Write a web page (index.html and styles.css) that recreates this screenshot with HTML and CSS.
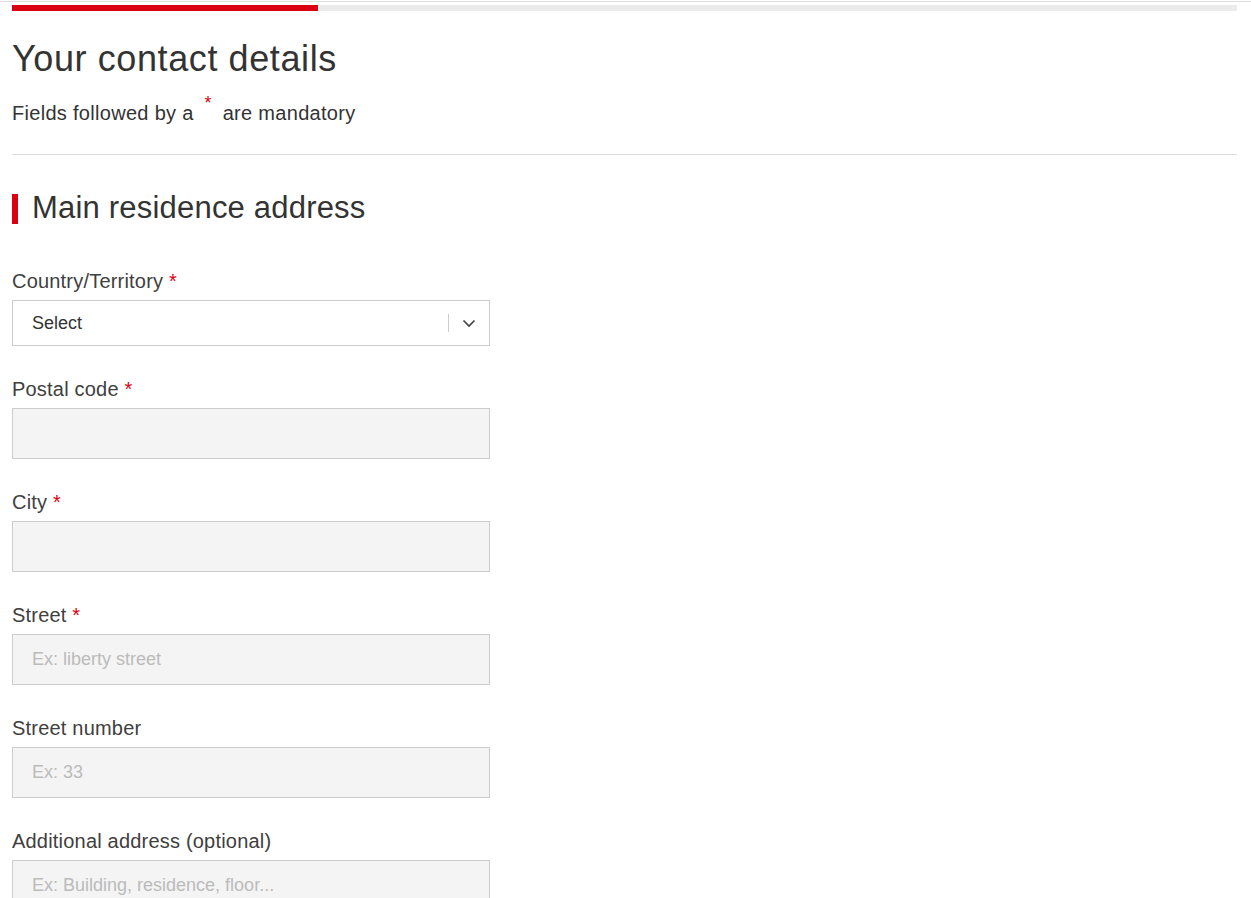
FILE: index.html
```html
<!DOCTYPE html>
<html lang="en">
<head>
<meta charset="UTF-8" />
<meta name="viewport" content="width=device-width, initial-scale=1.0" />
<title>Your contact details</title>
<link rel="stylesheet" href="styles.css">
</head>
<body>
<div class="topline"></div>
<div class="page">
  <div class="progress"><div class="progress-fill"></div></div>

  <h1 class="title">Your contact details</h1>
  <p class="intro">Fields followed by a <sup class="req">*</sup> are mandatory</p>

  <hr class="divider" />

  <h2 class="section-title">Main residence address</h2>

  <form class="form">
    <div class="field">
      <label class="label">Country/Territory <span class="req">*</span></label>
      <div class="select">
        <span class="select-value">Select</span>
        <span class="select-sep"></span>
        <svg class="chevron" width="14" height="9" viewBox="0 0 14 9"><path d="M1.5 1.5 L7 7 L12.5 1.5" fill="none" stroke="#444" stroke-width="1.7"/></svg>
      </div>
    </div>
    <div class="field">
      <label class="label">Postal code <span class="req">*</span></label>
      <input class="input" type="text" />
    </div>
    <div class="field">
      <label class="label">City <span class="req">*</span></label>
      <input class="input" type="text" />
    </div>
    <div class="field">
      <label class="label">Street <span class="req">*</span></label>
      <input class="input" type="text" placeholder="Ex: liberty street" />
    </div>
    <div class="field">
      <label class="label">Street number</label>
      <input class="input" type="text" placeholder="Ex: 33" />
    </div>
    <div class="field">
      <label class="label">Additional address (optional)</label>
      <input class="input" type="text" placeholder="Ex: Building, residence, floor..." />
    </div>
  </form>
</div>
</body>
</html>
```

FILE: styles.css
```css
body{margin:0;padding:0;font-family:"Liberation Sans",Arial,sans-serif;color:#333;background:#fff;}
.topline{height:1px;margin-top:1px;background:#ddd;}
.page{padding:3px 14px 0 12px;}
.progress{height:6px;background:#ebebeb;}
.progress-fill{width:306px;height:100%;background:#db0011;}
.title{margin:26px 0 0;font-size:36px;line-height:44px;font-weight:normal;letter-spacing:0.6px;color:#333;}
.intro{margin:19px 0 0;font-size:20px;line-height:26px;letter-spacing:0.3px;color:#333;}
.req{color:#db0011;}
.intro .req{font-size:18px;vertical-align:11px;line-height:0;padding:0 5px;}
.divider{margin:28px 0 0;border:0;border-top:1px solid #ddd;}
.section-title{margin:39px 0 0;display:flex;align-items:flex-start;font-size:31px;line-height:28px;font-weight:normal;letter-spacing:0.2px;color:#333;}
.section-title::before{content:"";width:6px;height:30px;background:#db0011;margin-right:14px;flex-shrink:0;}
.form{width:478px;margin-top:47px;display:flex;flex-direction:column;gap:33px;}
.field{display:flex;flex-direction:column;}
.label{font-size:20px;line-height:20px;margin-bottom:9px;letter-spacing:0.2px;color:#404040;}
.select{height:46px;box-sizing:border-box;border:1px solid #ccc;background:#fff;display:flex;align-items:center;padding:0 13px 0 19px;}
.select-value{flex:1;font-size:18px;color:#333;}
.select-sep{width:1px;height:18px;background:#ccc;margin-right:13px;}
.input{height:51px;box-sizing:border-box;border:1px solid #ccc;background:#f4f4f4;padding:0 19px;font-family:inherit;font-size:18px;color:#333;margin:0;}
.input::placeholder{color:#bbb;}
```
